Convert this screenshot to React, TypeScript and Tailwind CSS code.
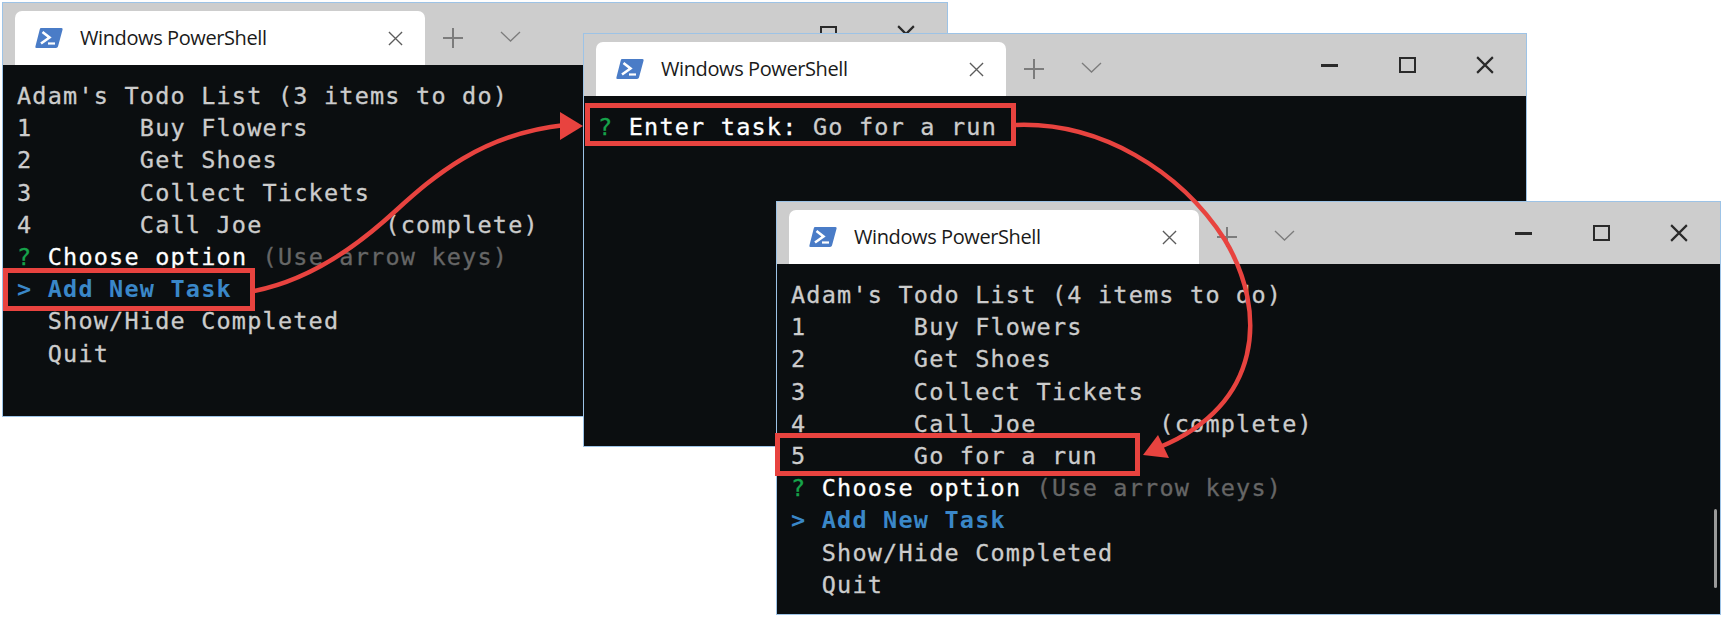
import type { ReactNode } from 'react'

const mono = "font-['DejaVu_Sans_Mono','Liberation_Mono',monospace]"

function PowerShellIcon() {
  return (
    <svg width="28" height="22" viewBox="0 0 28 22" className="shrink-0">
      <path d="M6 1 H26.5 Q28 1 27.6 2.6 L23 19.6 Q22.6 21 21 21 H1.5 Q0 21 0.4 19.4 L4.8 2.2 Q5.1 1 6 1 Z" fill="#4a7cc7" />
      <path d="M7.5 5 L14.5 10.5 L6 16.5" fill="none" stroke="#fff" strokeWidth="2.6" />
      <path d="M13 16.5 H20" fill="none" stroke="#fff" strokeWidth="2.2" />
    </svg>
  )
}

function CloseGlyph({ size, stroke, color }: { size: number; stroke: number; color: string }) {
  return (
    <svg width={size} height={size} viewBox="0 0 16 16">
      <path d="M1 1 L15 15 M15 1 L1 15" fill="none" stroke={color} strokeWidth={stroke} />
    </svg>
  )
}

function TitleBar() {
  return (
    <div className="flex h-[62px] shrink-0 bg-[#cdcdcd]">
      <div className="mt-2 ml-3 flex w-[410px] items-center rounded-t-[7px] bg-white pr-[22px] pl-5">
        <PowerShellIcon />
        <span className="ml-[17px] font-['Open_Sans',sans-serif] text-[20px] tracking-[-0.4px] text-[#1a1a1a]">Windows PowerShell</span>
        <span className="ml-auto flex">
          <CloseGlyph size={15} stroke={1.4} color="#5c5c5c" />
        </span>
      </div>
      <div className="mt-2 flex w-14 items-center justify-center">
        <svg width="20" height="20" viewBox="0 0 20 20">
          <path d="M10 0 V20 M0 10 H20" fill="none" stroke="#7c7c7c" strokeWidth="2" />
        </svg>
      </div>
      <div className="mt-1 flex w-[58px] items-center justify-center">
        <svg width="21" height="11" viewBox="0 0 21 11">
          <path d="M1 1 L10.5 10 L20 1" fill="none" stroke="#7c7c7c" strokeWidth="1.3" />
        </svg>
      </div>
      <div className="ml-auto flex pr-0.5">
        <div className="flex w-[78px] items-center justify-center">
          <div className="h-[3px] w-[17px] bg-[#2a2a2a]" />
        </div>
        <div className="flex w-[78px] items-center justify-center">
          <div className="h-4 w-[17px] border-2 border-[#2a2a2a]" />
        </div>
        <div className="flex w-[78px] items-center justify-center">
          <CloseGlyph size={18} stroke={1.9} color="#2a2a2a" />
        </div>
      </div>
    </div>
  )
}

function Line({ children }: { children?: ReactNode }) {
  return <div className="h-[32.2px] leading-[32.2px] whitespace-pre">{children}</div>
}

function Window({ className, children }: { className: string; children: ReactNode }) {
  return (
    <div className={`absolute flex flex-col border border-[#9dc3e6] ${className}`}>
      <TitleBar />
      <div className={`relative flex-1 bg-[#0b0e10] pt-[15px] pl-[14px] text-[23.5px] tracking-[1.2px] text-[#cccccc] [-webkit-text-stroke:0.3px] ${mono}`}>
        {children}
      </div>
    </div>
  )
}

function Menu() {
  return (
    <>
      <Line>
        <span className="text-[#16a34a]">?</span>
        <span className="text-white"> Choose option </span>
        <span className="text-[#666666]">(Use arrow keys)</span>
      </Line>
      <Line>
        <span className="font-bold text-[#3a87c8] [-webkit-text-stroke:0px]">&gt; Add New Task</span>
      </Line>
      <Line>  Show/Hide Completed</Line>
      <Line>  Quit</Line>
    </>
  )
}

export default function App() {
  return (
    <div className="relative h-[619px] w-[1725px] overflow-hidden bg-white">
      <Window className="top-0.5 left-0.5 h-[415px] w-[946px]">
        <Line>Adam's Todo List (3 items to do)</Line>
        <Line>1       Buy Flowers</Line>
        <Line>2       Get Shoes</Line>
        <Line>3       Collect Tickets</Line>
        <Line>4       Call Joe        (complete)</Line>
        <Menu />
      </Window>

      <Window className="top-[33px] left-[583px] h-[414px] w-[944px]">
        <Line>
          <span className="text-[#16a34a]">?</span>
          <span className="text-white"> Enter task: </span>
          Go for a run
        </Line>
      </Window>

      <Window className="top-[201px] left-[776px] h-[414px] w-[945px]">
        <Line>Adam's Todo List (4 items to do)</Line>
        <Line>1       Buy Flowers</Line>
        <Line>2       Get Shoes</Line>
        <Line>3       Collect Tickets</Line>
        <Line>4       Call Joe        (complete)</Line>
        <Line>5       Go for a run</Line>
        <Menu />
        <div className="absolute top-[245px] right-[3px] h-[79px] w-[3px] rounded-full bg-[#9a9a9a]" />
      </Window>

      {/* callouts */}
      <div className="absolute top-[268px] left-[3px] h-[43px] w-[252px] border-[5px] border-[#e8433f]" />
      <div className="absolute top-[103px] left-[585px] h-[43px] w-[431px] border-[5px] border-[#e8433f]" />
      <div className="absolute top-[433px] left-[775px] h-[43px] w-[365px] border-[5px] border-[#e8433f]" />

      <svg width="1725" height="619" viewBox="0 0 1725 619" className="pointer-events-none absolute top-0 left-0">
        <path d="M254 291 C300 282 345 255 383 222 C420 190 470 135 565 125" fill="none" stroke="#e8433f" strokeWidth="4.5" />
        <path d="M583 126 L560 112 L560 140 Z" fill="#e8433f" />
        <path d="M1016 125 C1100 122 1180 170 1225 240 C1268 312 1262 405 1160 447" fill="none" stroke="#e8433f" strokeWidth="4.5" />
        <path d="M1143 455 L1158 435 L1169 458 Z" fill="#e8433f" />
      </svg>
    </div>
  )
}
